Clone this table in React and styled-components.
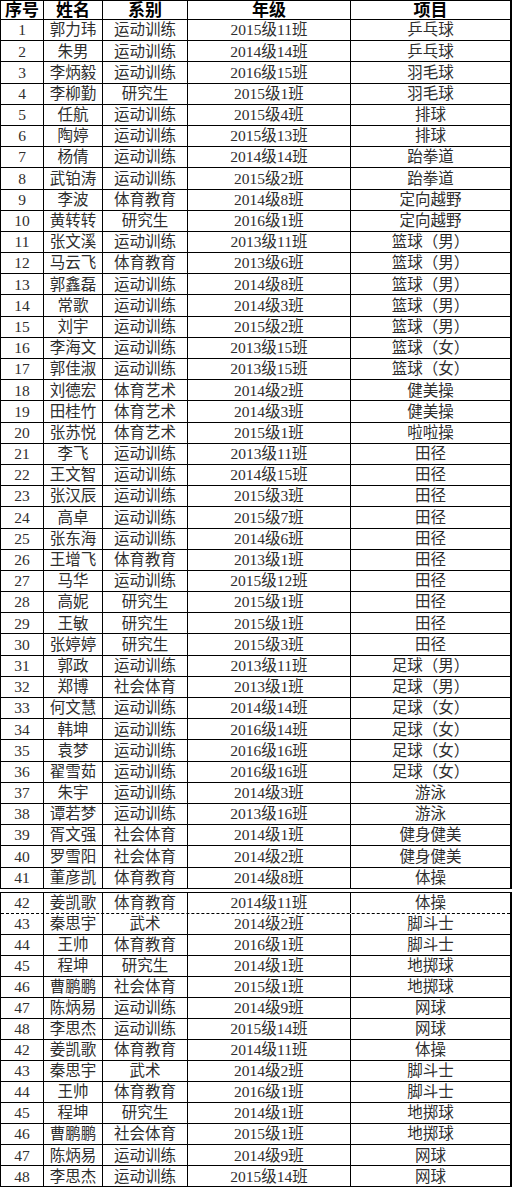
import React from "react";
import styled, { createGlobalStyle } from "styled-components";

const GlobalStyle = createGlobalStyle`
  html, body {
    margin: 0;
    padding: 0;
    background: #fff;
  }
  body {
    font-family: "Liberation Serif", "Noto Sans CJK SC", serif;
  }
`;

const COLUMNS = "43px 59px 85px 163px 1fr";

const Sheet = styled.div`
  width: 512px;
  height: 1189px;
  display: flex;
  flex-direction: column;
  gap: 3px;
  overflow: hidden;
`;

const Table = styled.div`
  display: flex;
  flex-direction: column;
  border-left: 1px solid #000;
  border-right: 2px solid #000;
  border-top: ${(p) => (p.$thick ? "2px" : "1px")} solid #000;
`;

const Row = styled.div`
  display: grid;
  grid-template-columns: ${COLUMNS};
  height: ${(p) => p.$h || "21.2px"};
  box-sizing: border-box;
  border-bottom: 1px ${(p) => (p.$dashed ? "dashed" : "solid")} #000;
`;

const Cell = styled.div`
  display: flex;
  align-items: center;
  justify-content: center;
  border-right: 1px solid #000;
  font-size: ${(p) => (p.$header ? "17px" : "15.5px")};
  font-weight: ${(p) => (p.$header ? 700 : 400)};
  color: ${(p) => (p.$header ? "#000" : "#2e2e2e")};
  white-space: nowrap;
  line-height: 1;
  overflow: hidden;

  &:last-child {
    border-right: none;
  }
`;

const HEAD = ["序号", "姓名", "系别", "年级", "项目"];

const rows = [
  [1, "郭力玮", "运动训练", "2015级11班", "乒乓球"],
  [2, "朱男", "运动训练", "2014级14班", "乒乓球"],
  [3, "李炳毅", "运动训练", "2016级15班", "羽毛球"],
  [4, "李柳勤", "研究生", "2015级1班", "羽毛球"],
  [5, "任航", "运动训练", "2015级4班", "排球"],
  [6, "陶婷", "运动训练", "2015级13班", "排球"],
  [7, "杨倩", "运动训练", "2014级14班", "跆拳道"],
  [8, "武铂涛", "运动训练", "2015级2班", "跆拳道"],
  [9, "李波", "体育教育", "2014级8班", "定向越野"],
  [10, "黄转转", "研究生", "2016级1班", "定向越野"],
  [11, "张文溪", "运动训练", "2013级11班", "篮球（男）"],
  [12, "马云飞", "体育教育", "2013级6班", "篮球（男）"],
  [13, "郭鑫磊", "运动训练", "2014级8班", "篮球（男）"],
  [14, "常歌", "运动训练", "2014级3班", "篮球（男）"],
  [15, "刘宇", "运动训练", "2015级2班", "篮球（男）"],
  [16, "李海文", "运动训练", "2013级15班", "篮球（女）"],
  [17, "郭佳淑", "运动训练", "2013级15班", "篮球（女）"],
  [18, "刘德宏", "体育艺术", "2014级2班", "健美操"],
  [19, "田桂竹", "体育艺术", "2014级3班", "健美操"],
  [20, "张苏悦", "体育艺术", "2015级1班", "啦啦操"],
  [21, "李飞", "运动训练", "2013级11班", "田径"],
  [22, "王文智", "运动训练", "2014级15班", "田径"],
  [23, "张汉辰", "运动训练", "2015级3班", "田径"],
  [24, "高卓", "运动训练", "2015级7班", "田径"],
  [25, "张东海", "运动训练", "2014级6班", "田径"],
  [26, "王增飞", "体育教育", "2013级1班", "田径"],
  [27, "马华", "运动训练", "2015级12班", "田径"],
  [28, "高妮", "研究生", "2015级1班", "田径"],
  [29, "王敏", "研究生", "2015级1班", "田径"],
  [30, "张婷婷", "研究生", "2015级3班", "田径"],
  [31, "郭政", "运动训练", "2013级11班", "足球（男）"],
  [32, "郑博", "社会体育", "2013级1班", "足球（男）"],
  [33, "何文慧", "运动训练", "2014级14班", "足球（女）"],
  [34, "韩坤", "运动训练", "2016级14班", "足球（女）"],
  [35, "袁梦", "运动训练", "2016级16班", "足球（女）"],
  [36, "翟雪茹", "运动训练", "2016级16班", "足球（女）"],
  [37, "朱宇", "运动训练", "2014级3班", "游泳"],
  [38, "谭若梦", "运动训练", "2013级16班", "游泳"],
  [39, "胥文强", "社会体育", "2014级1班", "健身健美"],
  [40, "罗雪阳", "社会体育", "2014级2班", "健身健美"],
  [41, "董彦凯", "体育教育", "2014级8班", "体操"],
];

const tail = [
  [42, "姜凯歌", "体育教育", "2014级11班", "体操"],
  [43, "秦思宇", "武术", "2014级2班", "脚斗士"],
  [44, "王帅", "体育教育", "2016级1班", "脚斗士"],
  [45, "程坤", "研究生", "2014级1班", "地掷球"],
  [46, "曹鹏鹏", "社会体育", "2015级1班", "地掷球"],
  [47, "陈炳易", "运动训练", "2014级9班", "网球"],
  [48, "李思杰", "运动训练", "2015级14班", "网球"],
];

const DataRow = ({ cells, dashed, h }) => (
  <Row $dashed={dashed} $h={h}>
    {cells.map((c, i) => (
      <Cell key={i}>{c}</Cell>
    ))}
  </Row>
);

const App = () => (
  <>
    <GlobalStyle />
    <Sheet>
      <Table>
        <Row $h="19px">
          {HEAD.map((h) => (
            <Cell key={h} $header>
              {h}
            </Cell>
          ))}
        </Row>
        {rows.map((r) => (
          <DataRow key={r[0]} cells={r} />
        ))}
      </Table>
      <Table>
        {[...tail, ...tail].map((r, i) => (
          <DataRow key={i} cells={r} dashed={i === 0} h="21.05px" />
        ))}
      </Table>
    </Sheet>
  </>
);

export default App;
